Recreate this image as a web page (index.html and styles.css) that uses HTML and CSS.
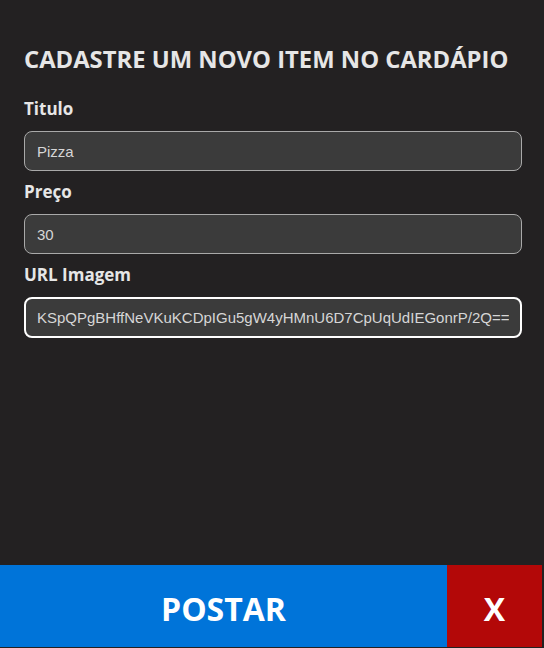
FILE: index.html
```html
<!DOCTYPE html>
<html lang="pt-BR">
<head>
<meta charset="utf-8">
<title>Cadastro</title>
<link rel="stylesheet" href="styles.css">
</head>
<body>
<div class="page">
  <form class="form">
    <h1 class="title">CADASTRE UM NOVO ITEM NO CARDÁPIO</h1>
    <label class="label" for="titulo">Titulo</label>
    <input class="field" id="titulo" type="text" value="Pizza">
    <label class="label" for="preco">Preço</label>
    <input class="field" id="preco" type="text" value="30">
    <label class="label" for="url">URL Imagem</label>
    <input class="field field-focus" id="url" type="text" value="KSpQPgBHffNeVKuKCDpIGu5gW4yHMnU6D7CpUqUdIEGonrP/2Q==">
  </form>
  <div class="actions">
    <button class="btn btn-post" type="button">POSTAR</button>
    <button class="btn btn-close" type="button">X</button>
  </div>
</div>
</body>
</html>
```
FILE: styles.css
```css
html, body {
  margin: 0;
  padding: 0;
  background: #232122;
}
.page {
  height: 100vh;
  display: flex;
  flex-direction: column;
  font-family: "Open Sans", "Noto Sans", sans-serif;
  color: #e4e4e4;
}
.form {
  display: flex;
  flex-direction: column;
  padding: 43px 22px 0 24px;
}
.title {
  margin: 0 0 23px;
  font-size: 23.8px;
  font-weight: 700;
  line-height: 32px;
  color: #e6e6e6;
  white-space: nowrap;
}
.label {
  font-size: 17px;
  font-weight: 700;
  line-height: 22px;
  margin-bottom: 11px;
  color: #e6e6e6;
}
.field {
  box-sizing: border-box;
  height: 40px;
  margin: 0 0 10px;
  padding: 0 12px;
  border: 1px solid #a9a9a9;
  border-radius: 8px;
  background: #3b3b3b;
  color: #d6d6d6;
  font-family: "Liberation Sans", Arial, sans-serif;
  font-size: 15px;
  outline: none;
}
.field-focus {
  border: 2px solid #ffffff;
  height: 41px;
  padding: 0 11px;
}
.actions {
  margin-top: auto;
  height: 82px;
  margin-bottom: 1px;
  display: grid;
  grid-template-columns: 447px 95px;
}
.btn {
  border: none;
  margin: 0;
  padding: 4px 0 0;
  color: #ffffff;
  font-family: "Open Sans", "Noto Sans", sans-serif;
  font-weight: 700;
  font-size: 32px;
}
.btn-post {
  background: #0074d9;
}
.btn-close {
  background: #b30808;
}
```
